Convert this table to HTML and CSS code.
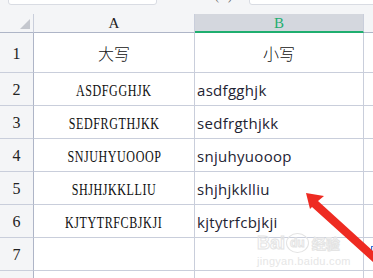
FILE: index.html
```html
<!DOCTYPE html>
<html lang="zh-CN">
<head>
<meta charset="utf-8">
<title>大写小写</title>
<link rel="stylesheet" href="styles.css">
</head>
<body>
<div class="page">
  <div class="topbar">
    <div class="namebox"></div>
    <div class="fx">( )</div>
    <div class="formula"></div>
  </div>
  <div class="sheet">
    <div class="corner"><span class="tri"></span></div>
    <div class="colhead">A</div>
    <div class="colhead sel">B</div>
    <div class="colhead rest"></div>

    <div class="rowhead tall">1</div>
    <div class="cell cn tall">大写</div>
    <div class="cell cn tall">小写</div>
    <div class="cell rest tall"></div>

    <div class="rowhead">2</div>
    <div class="cell up"><span>ASDFGGHJK</span></div>
    <div class="cell low">asdfgghjk</div>
    <div class="cell rest"></div>

    <div class="rowhead">3</div>
    <div class="cell up"><span>SEDFRGTHJKK</span></div>
    <div class="cell low">sedfrgthjkk</div>
    <div class="cell rest"></div>

    <div class="rowhead">4</div>
    <div class="cell up"><span>SNJUHYUOOOP</span></div>
    <div class="cell low">snjuhyuooop</div>
    <div class="cell rest"></div>

    <div class="rowhead">5</div>
    <div class="cell up"><span>SHJHJKKLLIU</span></div>
    <div class="cell low">shjhjkklliu</div>
    <div class="cell rest"></div>

    <div class="rowhead">6</div>
    <div class="cell up"><span>KJTYTRFCBJKJI</span></div>
    <div class="cell low">kjtytrfcbjkji</div>
    <div class="cell rest"></div>

    <div class="rowhead">7</div>
    <div class="cell"></div>
    <div class="cell"></div>
    <div class="cell rest"><span class="chip"></span></div>

    <div class="rowhead">8</div>
    <div class="cell"></div>
    <div class="cell"></div>
    <div class="cell rest"></div>
  </div>

  <div class="watermark">
    <div class="wm-logo"><span class="wm-bai">Bai</span><span class="wm-du">du</span><span class="wm-cn">经验</span></div>
    <div class="wm-url">jingyan.baidu.com</div>
  </div>

  <svg class="arrow" width="373" height="278" viewBox="0 0 373 278">
    <polygon points="306,193 324,196 318,201 374,252 374,263 312,207 310,209" fill="#ee2b22"/>
  </svg>
</div>
</body>
</html>
```

FILE: styles.css
```css
* { box-sizing: border-box; }
html, body {
  margin: 0;
  padding: 0;
}
body {
  background: #f4f5f7;
  width: 373px;
  height: 278px;
  overflow: hidden;
}
.page {
  position: relative;
  width: 373px;
  height: 278px;
  overflow: hidden;
}
.topbar {
  height: 14px;
  display: flex;
  align-items: flex-start;
  overflow: hidden;
}
.namebox {
  margin-left: 8px;
  margin-top: -16px;
  width: 149px;
  height: 21px;
  background: #fff;
  border: 1px solid #d9dce3;
  border-radius: 3px;
}
.fx {
  margin-left: 58px;
  margin-top: -11px;
  font: 12px "Liberation Serif", serif;
  color: #666;
  letter-spacing: 3px;
}
.formula {
  margin-left: 14px;
  margin-top: -16px;
  flex: 1;
  height: 21px;
  background: #fff;
  border: 1px solid #d9dce3;
  border-radius: 3px;
  margin-right: -4px;
}
.sheet {
  display: grid;
  grid-template-columns: 34px 161px 169px 1fr;
  grid-template-rows: 19px 40px repeat(7, 33px);
}
.corner, .colhead {
  border-bottom: 1px solid #aeb5c7;
  border-right: 1px solid #c9cedb;
}
.corner {
  position: relative;
}
.tri {
  position: absolute;
  left: 20px;
  top: 5px;
  width: 0;
  height: 0;
  border-left: 10px solid transparent;
  border-bottom: 10px solid #c4c7ce;
}
.colhead {
  font: 15px/19px "Liberation Serif", serif;
  color: #222;
  text-align: center;
}
.colhead.sel {
  background: #d4d7de;
  color: #1fae6f;
  border-bottom: 2px solid #1fae6f;
  line-height: 18px;
}
.colhead.rest { border-right: none; }
.rowhead {
  font: 16px "Liberation Serif", serif;
  color: #222;
  display: flex;
  align-items: center;
  justify-content: center;
  border-right: 1px solid #aeb5c7;
  border-bottom: 1px solid #c9cedb;
  padding-top: 2px;
}
.cell {
  background: #fff;
  border-right: 1px solid #c9cedb;
  border-bottom: 1px solid #c9cedb;
  display: flex;
  align-items: center;
  color: #111;
}
.cell.rest { border-right: none; position: relative; }
.cn {
  justify-content: center;
  font: 16px "Noto Sans CJK SC", sans-serif;
  font-weight: 300;
}
.up {
  justify-content: center;
  font: 16.5px "Liberation Serif", serif;
  padding-top: 3px;
}
.up span {
  display: inline-block;
  white-space: nowrap;
  letter-spacing: 0.8px;
  transform: scaleX(0.73);
}
.low {
  justify-content: flex-start;
  padding-left: 2px;
  padding-top: 1px;
  font: 15px "Open Sans", sans-serif;
  letter-spacing: 0.3px;
  color: #1e2333;
}
.chip {
  position: absolute;
  left: 7px;
  top: 8px;
  width: 4px;
  height: 13px;
  border: 1px solid #3a6fd8;
  background: #dfe8fb;
}
.watermark {
  position: absolute;
  left: 257px;
  top: 232px;
  width: 92px;
  color: transparent;
  -webkit-text-stroke: 1px #e4e4e4;
}
.wm-logo {
  display: flex;
  align-items: center;
  gap: 1px;
  height: 22px;
}
.wm-bai {
  font: bold 18px "Liberation Sans", sans-serif;
}
.wm-du {
  font: bold 12px "Liberation Sans", sans-serif;
  border: 1px solid #e4e4e4;
  border-radius: 50%;
  padding: 2px 3px;
}
.wm-cn {
  font: bold 14px "Noto Sans CJK SC", sans-serif;
  margin-left: 2px;
}
.wm-url {
  font: 11px "Liberation Sans", sans-serif;
  color: #e6e6e6;
  -webkit-text-stroke: 0;
  margin-top: 1px;
  letter-spacing: 0.3px;
}
.arrow {
  position: absolute;
  left: 0;
  top: 0;
}
```
